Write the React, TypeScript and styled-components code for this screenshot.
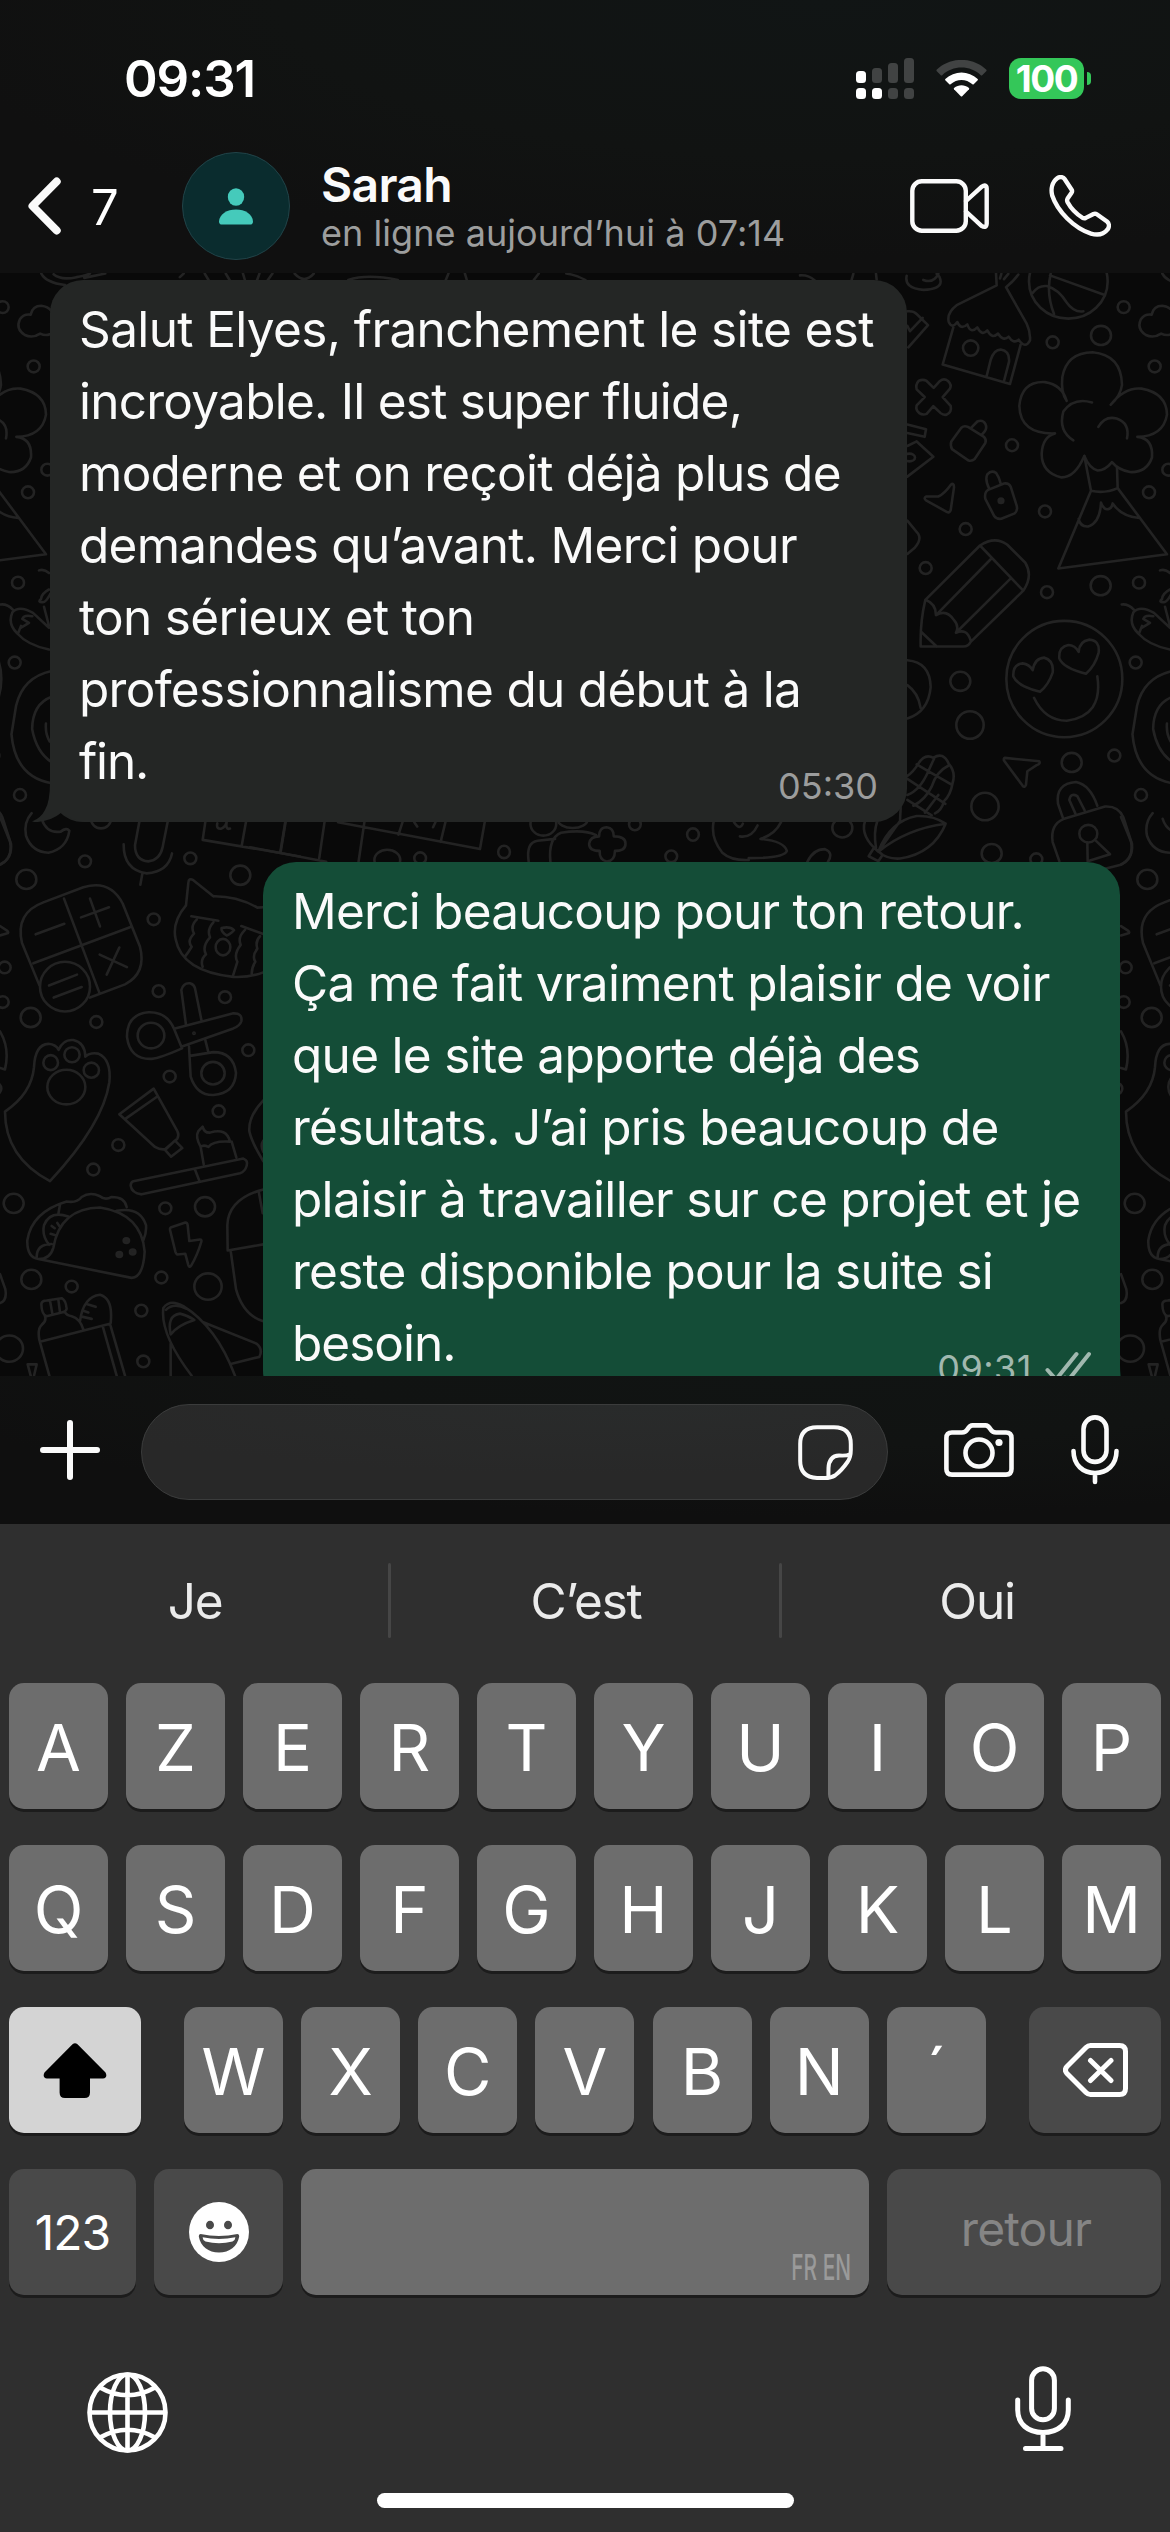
import React from "react";
import styled, { createGlobalStyle, css } from "styled-components";

const GlobalStyle = createGlobalStyle`
  * { box-sizing: border-box; }
  html, body { margin: 0; padding: 0; background: #2f2f2f; }
  body { font-family: Inter, Roboto, "Liberation Sans", sans-serif; color: #fff; }
  svg { display: block; flex: none; }
`;

const Screen = styled.div`
  width: 1170px;
  height: 2532px;
  display: flex;
  flex-direction: column;
  overflow: hidden;
  background: #2f2f2f;
`;

/* ---------- header ---------- */

const Header = styled.header`
  height: 273px;
  flex: none;
  background: radial-gradient(ellipse 900px 260px at 820px 0, #111515 0%, #111312 60%, #101010 100%);
`;

const StatusBar = styled.div`
  height: 148px;
  padding: 8px 79px 0 124px;
  display: flex;
  align-items: center;
`;

const Clock = styled.span`
  flex: 1;
  font-size: 51px;
  font-weight: 600;
  letter-spacing: -1.1px;
`;

const Battery = styled.div`
  width: 75px;
  height: 41px;
  margin-left: 22px;
  border-radius: 12px;
  background: #34c759;
  display: flex;
  align-items: center;
  justify-content: center;
  font-size: 37px;
  font-weight: 700;
  letter-spacing: -1.4px;
`;

const BatteryNub = styled.div`
  width: 4px;
  height: 13px;
  margin-left: 3px;
  border-radius: 0 4px 4px 0;
  background: #34c759;
`;

const NavBar = styled.div`
  height: 125px;
  padding: 0 59px 9px 28px;
  display: flex;
  align-items: center;
`;

const UnreadCount = styled.span`
  width: 91px;
  margin-left: 30px;
  padding-top: 2px;
  font-size: 49px;
`;

const Avatar = styled.div`
  width: 108px;
  height: 108px;
  border: 1px solid #214348;
  border-radius: 50%;
  background: #0a2c2e;
  display: flex;
  align-items: center;
  justify-content: center;
`;

const Contact = styled.div`
  flex: 1;
  margin-left: 31px;
  display: flex;
  flex-direction: column;
  gap: 3px;
`;

const ContactName = styled.span`
  font-size: 48px;
  line-height: 50px;
  font-weight: 600;
  letter-spacing: -0.7px;
  color: #fafafa;
`;

const ContactStatus = styled.span`
  font-size: 36px;
  line-height: 40px;
  letter-spacing: 0.05px;
  white-space: nowrap;
  color: #9d9e9e;
`;

const NavActions = styled.div`
  display: flex;
  align-items: center;
  gap: 60px;
`;

/* ---------- conversation ---------- */

const Conversation = styled.main`
  position: relative;
  height: 1103px;
  flex: none;
  overflow: hidden;
  background: #090909;
  display: flex;
  flex-direction: column;
  gap: 40px;
  padding: 7px 50px 0;
`;

const Wallpaper = styled.svg`
  position: absolute;
  left: 0;
  top: 0;

  .ink * {
    vector-effect: non-scaling-stroke;
  }
`;

const Bubble = styled.article<{ $mine?: boolean }>`
  position: relative;
  width: 857px;
  height: 542px;
  flex: none;
  padding: 13px 29px 18px;
  border-radius: 33px;
  display: flex;
  flex-direction: column;
  align-self: ${(p) => (p.$mine ? "flex-end" : "flex-start")};
  background: ${(p) => (p.$mine ? "#144d37" : "#242625")};
`;

const Tail = styled.svg<{ $mine?: boolean }>`
  position: absolute;
  bottom: 0;
  ${(p) =>
    p.$mine
      ? css`
          right: -18px;
          transform: scaleX(-1);
        `
      : css`
          left: -18px;
        `}
`;

const Line = styled.span<{ $track: number }>`
  position: relative;
  font-size: 49.5px;
  line-height: 72px;
  white-space: nowrap;
  color: #fafafa;
  letter-spacing: ${(p) => p.$track}px;
`;

const Meta = styled.div<{ $mine?: boolean }>`
  align-self: flex-end;
  position: relative;
  margin-top: -29px;
  display: flex;
  align-items: flex-start;
  gap: 13px;
  font-size: 36px;
  line-height: 36px;
  letter-spacing: ${(p) => (p.$mine ? "0.5px" : "0")};
  color: ${(p) => (p.$mine ? "#a1b8af" : "#9c9d9d")};
`;

/* ---------- composer ---------- */

const Composer = styled.section`
  height: 148px;
  flex: none;
  padding: 0 51px 0 40px;
  display: flex;
  align-items: center;
  background: radial-gradient(ellipse 900px 140px at 800px 0, #111413 0%, #111312 50%, #0f0f0f 100%);
`;

const Field = styled.div`
  width: 747px;
  height: 96px;
  margin: 4px 56px 0 41px;
  padding-right: 34px;
  border: 1px solid #3b3c3c;
  border-radius: 48px;
  background: radial-gradient(ellipse 560px 70px at 480px 0, #292b2b 0%, #282828 100%);
  display: flex;
  align-items: center;
  justify-content: flex-end;
`;

const MicSlot = styled.div`
  margin-left: 57px;
`;

/* ---------- keyboard ---------- */

const Keyboard = styled.section`
  flex: 1;
  display: flex;
  flex-direction: column;
`;

const Suggestions = styled.div`
  height: 153px;
  margin-bottom: 6px;
  display: flex;
  align-items: center;
`;

const Suggestion = styled.span`
  flex: 1;
  padding-left: 2px;
  text-align: center;
  font-size: 49.5px;
  letter-spacing: -1.2px;
  color: #ebebeb;
`;

const Divider = styled.i`
  width: 3px;
  height: 75px;
  border-radius: 2px;
  background: #464646;
`;

const Rows = styled.div`
  padding: 0 9px;
  display: flex;
  flex-direction: column;
  gap: 36px;
`;

const Row = styled.div`
  display: flex;
  justify-content: space-between;
`;

const LetterGroup = styled.div`
  width: 802px;
  display: flex;
  justify-content: space-between;
`;

type Tone = "letter" | "dark" | "light";

const tones: Record<Tone, string> = {
  letter: "#6d6d6d",
  dark: "#494949",
  light: "#d4d4d4",
};

const Key = styled.div<{ $w?: number; $tone?: Tone }>`
  width: ${(p) => p.$w ?? 99}px;
  height: 126px;
  padding-top: 3px;
  border-radius: 15px;
  background: ${(p) => tones[p.$tone ?? "letter"]};
  box-shadow: 0 3px 0 #1c1c1c;
  display: flex;
  align-items: center;
  justify-content: center;
  font-size: 65px;
`;

const IconKey = styled(Key)`
  padding-top: 0;
`;

const LabelKey = styled(Key)<{ $muted?: boolean }>`
  font-size: 48px;
  ${(p) =>
    p.$muted
      ? css`
          padding: 0 0 8px 4px;
          letter-spacing: -0.9px;
          color: #858585;
        `
      : css`
          padding: 0;
          letter-spacing: -1px;
        `}
`;

const SpaceKey = styled(Key)`
  align-items: flex-end;
  justify-content: flex-end;
  padding: 0 18px 8px 0;
`;

const Languages = styled.span`
  font-size: 36px;
  line-height: 40px;
  font-weight: 500;
  white-space: nowrap;
  color: #9a9a9a;
  transform: scaleX(0.58);
  transform-origin: right center;
`;

const KeyboardFooter = styled.div`
  height: 198px;
  padding: 36px 99px 0 87px;
  display: flex;
  align-items: center;
  justify-content: space-between;
`;

const FooterMic = styled.div`
  margin-top: -7px;
`;

const HomeIndicator = styled.div`
  width: 417px;
  height: 15px;
  margin: 0 auto;
  border-radius: 8px;
  background: #fff;
`;

/* ---------- icons ---------- */

const line = { fill: "none", stroke: "#fafafa", strokeLinecap: "round" as const, strokeLinejoin: "round" as const };

const Signal = () => (
  <svg width="58" height="41" viewBox="0 0 58 41">
    <g fill="#fff">
      <rect x="0" y="13" width="10" height="12" rx="3.5" />
      <rect x="0" y="30" width="10" height="11" rx="3.5" />
      <rect x="16" y="30" width="10" height="11" rx="3.5" />
    </g>
    <g fill="#414343">
      <rect x="16" y="10" width="10" height="15" rx="3.5" />
      <rect x="32" y="5" width="10" height="20" rx="3.5" />
      <rect x="48" y="0" width="10" height="25" rx="3.5" />
      <rect x="32" y="30" width="10" height="11" rx="3.5" />
      <rect x="48" y="30" width="10" height="11" rx="3.5" />
    </g>
  </svg>
);

const WifiGlyph = styled.svg`
  margin-left: 22px;
`;

const WifiIcon = () => (
  <WifiGlyph width="51" height="37" viewBox="0 0 51 37">
    <path d="M0.6 9.8C14-3.4 37-3.4 50.4 9.8Q50.8 10.6 50.2 11.2L46.2 15.2Q45.4 15.8 44.8 15.2C34 5 17 5 6.200 15.200Q5.500 15.800 4.800 15.200L0.800 11.200Q0.200 10.600 0.600 9.800Z" fill="#414343" />
    <path d="M9.300 19C18.500 10.300 32.500 10.300 41.700 19Q42.200 19.700 41.700 20.300L37.700 24.300Q37 24.800 36.400 24.300C30 18.500 21 18.500 14.600 24.300Q14 24.800 13.300 24.300L9.300 20.300Q8.800 19.700 9.300 19Z" fill="#fff" />
    <path d="M18 28C22.500 24.300 28.500 24.300 33 28Q33.500 28.600 33 29.200L26.200 36.300Q25.500 36.900 24.800 36.300L18 29.200Q17.500 28.600 18 28Z" fill="#fff" />
  </WifiGlyph>
);

const BackIcon = () => (
  <svg width="33" height="58" viewBox="0 0 33 58">
    <path d="M28.700 4.500L4.500 29L28.700 53.500" {...line} strokeWidth="8" />
  </svg>
);

const PersonIcon = () => (
  <svg width="34" height="37" viewBox="0 0 34 37" fill="#45cabb">
    <ellipse cx="17" cy="9" rx="8.200" ry="8.800" />
    <path d="M3 36.600Q0 36.600 0 33.500C0.500 26 8 21.500 17 21.500S33.500 26 34 33.500Q34 36.600 31 36.600Z" />
  </svg>
);

const VideoIcon = () => (
  <svg width="79" height="54" viewBox="0 0 79 54">
    <g {...line} strokeWidth="4.400">
      <rect x="2.300" y="2.300" width="53.500" height="49.400" rx="9.500" />
      <path d="M56 22L71.500 7.800Q76.500 4.600 76.700 9.500V44.500Q76.500 49.800 71.500 46.800L56 32.500" />
    </g>
  </svg>
);

const PhoneIcon = () => (
  <svg width="62" height="62" viewBox="0 0 62 62">
    <path
      d="M8.200 3.200C10.500 1.500 14 1.600 15.600 4L22.800 15Q23.500 16.500 22.400 18L18.600 23.500Q17.600 25.200 18.600 27.200C22 33.500 27.500 39 33.800 43Q35.200 43.600 36.800 42.900L44.500 39Q46.200 38.200 47.800 39.300L58 46.500C60.500 48.600 60.400 51.800 58.600 54.400C54.500 59.600 48.500 60.500 42 58.600C25 53 8.500 36.500 3.200 20.500C1.600 14 3.200 7 8.200 3.200Z"
      {...line}
      strokeWidth="4.400"
    />
  </svg>
);

const Ticks = () => (
  <svg width="46" height="34" viewBox="0 0 46 34">
    <path d="M2.500 20L11 29.500L31.500 4M20 27.500L23 30.500L44 4" fill="none" stroke="#a1b8af" strokeWidth="4" strokeLinecap="round" strokeLinejoin="round" />
  </svg>
);

const PlusIcon = () => (
  <svg width="60" height="60" viewBox="0 0 60 60">
    <path d="M30 3V57M3 30H57" {...line} strokeWidth="6" />
  </svg>
);

const StickerIcon = () => (
  <svg width="55" height="55" viewBox="0 0 55 55">
    <g {...line} strokeWidth="4">
      <path d="M19 2.200H36Q52.800 2.200 52.800 19V25Q52.800 32.500 49.500 37C46 42 41 47.500 37 50.500Q33 53 27 53H19Q2.200 52 2.200 36V19Q2.200 2.200 19 2.200Z" />
      <path d="M30.500 52Q30.300 49 30.500 43Q31 31 41 30.500Q48.500 31 51.500 29.500" />
    </g>
  </svg>
);

const CameraIcon = () => (
  <svg width="70" height="54" viewBox="0 0 70 54">
    <g {...line} strokeWidth="4.600">
      <path d="M8 9.500H18Q21.500 9.500 23.300 6.500Q25.800 2.400 28.500 2.400H41.500Q44.200 2.400 46.700 6.500Q48.500 9.500 52 9.500H62Q67.500 9.500 67.500 15V46Q67.500 51.600 62 51.600H8Q2.400 51.600 2.400 46V15Q2.400 9.500 8 9.500Z" />
      <circle cx="35" cy="30" r="13.500" />
    </g>
    <circle cx="55" cy="19.500" r="3.600" fill="#fafafa" />
  </svg>
);

const MicIcon = () => (
  <svg width="48" height="70" viewBox="0 0 48 70">
    <g {...line} strokeWidth="4.600">
      <rect x="12.500" y="2.400" width="23" height="44.500" rx="11.500" />
      <path d="M2.500 36C2.500 50 12 58 24 58S45.500 50 45.500 36M24 58V67" />
    </g>
  </svg>
);

const DictationIcon = () => (
  <svg width="56" height="86" viewBox="0 0 56 86">
    <g {...line} strokeWidth="5" stroke="#fff">
      <rect x="16.600" y="2.800" width="22.800" height="51" rx="11.400" />
      <path d="M2.700 34V44C2.700 58 13 66.500 28 66.500S53.300 58 53.300 44V34M28 67V82.500M10.500 82.500H46" />
    </g>
  </svg>
);

const ShiftIcon = () => (
  <svg width="64" height="55" viewBox="0 0 64 55">
    <path d="M29.500 1.200Q32 -0.800 34.500 1.200L62.500 29.500Q65 34.500 60 35.500H47V49.500Q47 55 41.500 55H22Q16.600 55 16.600 49.500V35.500H4Q-1 34.500 1.500 29.500Z" />
  </svg>
);

const BackspaceIcon = () => (
  <svg width="65" height="54" viewBox="0 0 65 54">
    <path d="M27.500 2.500H56.500Q62.500 2.500 62.500 8.500V45.500Q62.500 51.500 56.500 51.500H27.500Q25 51.500 23 49.500L4 30.500Q0.800 27 4 23.500L23 4.500Q25 2.500 27.500 2.500ZM27.500 17.500L48 37.500M48 17.500L27.500 37.500" {...line} stroke="#fff" strokeWidth="5" />
  </svg>
);

const EmojiIcon = () => (
  <svg width="60" height="60" viewBox="0 0 60 60">
    <circle cx="30" cy="30" r="30" fill="#fff" />
    <ellipse cx="21" cy="23" rx="4" ry="4.300" fill="#494949" />
    <ellipse cx="39" cy="23" rx="4" ry="4.300" fill="#494949" />
    <path d="M11.500 32Q30 36 48.500 32Q50.500 32 50.200 34.500C48.500 44.500 40.500 50.500 30 50.500S11.500 44.500 9.800 34.500Q9.500 32 11.500 32Z" fill="#494949" />
    <path d="M13.600 35.200Q30 38.600 46.400 35.200Q46.200 38.500 43.500 39.500Q30 43 16.500 39.500Q13.800 38.500 13.600 35.200Z" fill="#fff" />
  </svg>
);

const GlobeIcon = () => (
  <svg width="81" height="81" viewBox="0 0 81 81">
    <g fill="none" stroke="#fff" strokeWidth="4.600">
      <circle cx="40.500" cy="40.500" r="38" />
      <ellipse cx="40.500" cy="40.500" rx="17.500" ry="38" />
      <path d="M40.500 2.500V78.500M2.500 40.500H78.500M13 15.500Q40.500 31 68 15.500M13 65.500Q40.500 50 68 65.500" />
    </g>
  </svg>
);

/* ---------- wallpaper doodles ---------- */

type Ring = [number, number, number, number];

const Rings = ({ items }: { items: Ring[] }) => (
  <>
    {items.map(([cx, cy, rx, ry]) => (
      <ellipse key={`${cx}-${cy}`} cx={cx} cy={cy} rx={rx} ry={ry} />
    ))}
  </>
);

const sized = (points: [number, number][], rx: number, ry: number): Ring[] => points.map(([x, y]) => [x, y, rx, ry]);

const upperRings: Ring[] = [
  ...sized([[971, 97], [758, 189], [1064, 252], [636, 458], [735, 631], [497, 677], [377, 779], [741, 842], [1017, 817], [1047, 581], [1007, 1026], [943, 1269], [1023, 1372], [709, 1540], [1105, 522]], 18, 15.5),
  ...sized([[903, 171], [902, 825], [481, 1075], [815, 1287], [575, 1525], [127, 1458]], 30, 25),
  ...sized([[510, 1189], [555, 1402]], 41, 36),
  [805, 30, 118, 97], [512, 204, 23, 20], [793, 1069, 174, 152], [865, 1473, 27, 23], [328, 490, 17, 10],
];

const upperPaths = [
  "M588 8L590 40L470 92Q440 112 446 135Q456 155 472 136Q482 158 502 142Q512 168 532 150Q546 174 562 158Q576 182 594 166Q610 188 626 174Q640 194 656 182Q676 208 690 184Q692 162 680 140L618 45Q640 30 655 12M600 22L604 10M612 24L625 10",
  "M460 150L428 247L630 298L662 195M560 277L572 235Q582 208 602 208Q630 212 627 240L612 290",
  "M752 10Q738 60 762 115M750 14L910 64M698 60Q715 40 740 42Q775 50 800 85Q822 112 850 108",
  "M320 15Q312 48 370 52Q422 50 422 30Q420 15 410 10M370 26Q400 36 415 10",
  "M401 308L420 290Q432 282 444 290Q456 300 450 310L428 332L452 355Q456 372 440 378Q430 380 422 374L400 356L380 376Q368 380 358 374Q346 366 350 354L374 332L350 312Q346 300 356 290Q368 284 380 290Z",
  "M484 412Q492 406 504 410L552 436Q560 444 556 452L524 494Q516 500 506 498L456 468Q450 458 454 448ZM514 412L532 396Q548 390 556 402Q562 412 554 422L544 432",
  "M566 574L612 558Q626 556 632 566L650 616Q654 628 644 636L604 650Q590 652 582 642L556 598Q552 580 566 574ZM568 572Q554 548 562 534Q574 522 588 530Q598 542 602 558",
  "M378 592L415 592Q432 586 452 562Q462 554 462 568L452 628Q448 636 440 632L378 602Q370 596 378 592Z",
  "M800 342Q782 320 787 280Q800 216 878 215Q964 222 966 300Q962 328 932 352Q975 305 1025 310Q1100 322 1101 378Q1090 435 1012 436Q1060 440 1056 490Q1040 530 990 528Q955 522 936 502Q915 524 893 524Q868 518 853 486Q825 542 785 542Q725 530 725 480Q728 435 765 427Q660 430 658 355Q665 290 735 293Q786 300 800 342M876 346Q820 332 790 370Q774 420 820 445M895 410Q915 380 950 388Q990 400 981 440",
  "M853 486L873 577L775 780L1101 743L953 570L951 515M873 577Q915 585 953 570M836 650Q840 672 866 670Q900 660 903 608Q912 630 928 624Q936 620 938 610Q965 645 1018 648",
  "M540 720L376 862Q360 920 362 984L490 984Q505 984 512 972L670 838Q700 800 676 765L622 718Q585 694 540 720ZM540 720L670 838M572 756L408 902Q408 872 376 862M408 902Q440 885 462 915Q478 930 468 948Q500 935 512 968M468 948L630 808M364 946L410 984",
  "M836 998Q838 970 868 966Q900 968 896 1000Q885 1035 858 1055Q790 1040 778 1015Q775 985 805 980Q825 980 836 998ZM698 1046Q704 1015 732 1013Q762 1020 758 1052Q745 1085 720 1102Q655 1090 640 1062Q638 1030 668 1028Q688 1030 698 1046ZM702 1118Q735 1178 800 1178Q910 1165 892 1062",
  "M615 1275L718 1284Q722 1290 710 1294L682 1310L678 1345Q674 1354 668 1348L612 1282Q610 1276 615 1275Z",
  "M790 1435L774 1395Q766 1342 828 1338Q870 1345 892 1400M826 1420L808 1385Q812 1365 832 1375L854 1412M790 1435L915 1402Q955 1400 970 1430L996 1500Q1000 1540 960 1555L900 1568M790 1435Q750 1450 758 1495L778 1545M862 1496L863 1545L930 1527L888 1492",
  "M322 1322Q340 1312 355 1290Q375 1262 400 1275Q430 1258 446 1290Q468 1312 458 1340Q452 1372 432 1388Q425 1412 405 1420M322 1330L436 1395M350 1292Q385 1310 455 1345M322 1385L395 1425M322 1372Q360 1360 385 1310Q395 1290 402 1278M340 1400Q375 1385 395 1350Q410 1310 446 1295M375 1418L415 1372",
  "M235 1520Q270 1440 350 1427Q400 1425 437 1447Q400 1525 300 1538Q260 1540 235 1520M437 1447Q320 1460 235 1520M235 1520Q180 1480 195 1440M228 1510Q220 1470 232 1440M235 1520L300 1440L302 1405M206 1532L235 1545L248 1528L222 1510Z",
  "M322 108Q340 106 350 115L384 144L325 202M322 146L330 160L368 125M322 404L378 416L374 436L322 426M322 460L350 448L400 488L322 540M322 655L355 690Q365 705 345 725L322 742M322 1020Q390 1025 392 1090Q385 1155 322 1172M322 1085Q355 1105 362 1145",
  "M965 874Q985 872 1002 888M1062 896Q1020 875 1000 895Q985 925 1015 950Q1045 980 1110 992M1018 948L1026 930M1062 896L1110 935M1060 905Q1035 900 1030 912L1050 922L1025 935M1080 785Q1095 780 1110 792M1110 835Q1088 845 1086 860Q1075 868 1090 868Q1100 870 1115 845M1095 880L1110 930",
  "M0 14Q25 12 45 28M155 25L160 10M228 10L230 25",
];

const leftPaths = [
  "M130 180Q118 185 105 178Q85 192 65 182Q40 165 52 138Q62 122 80 125Q85 100 108 100Q125 102 135 115",
  "M135 1123Q60 1140 42 1220L30 1300Q40 1420 135 1437M135 1195Q85 1215 84 1285Q95 1350 135 1378M120 1270Q118 1300 130 1320",
  "M108 10Q120 35 170 42M140 12Q160 30 200 20Q225 15 235 10M220 22L275 10M470 20L480 10M535 10L545 28M590 10L600 28M635 10L640 28M672 28L678 10M700 28L712 10M770 10Q795 40 820 10M910 28Q960 10 1040 28M1165 28L1172 10M1215 10L1220 28M1395 28L1408 10M1480 10Q1510 15 1530 28",
];

const lowerRings: Ring[] = [
  ...sized([[255, 163], [571, 155], [461, 317], [14, 445], [476, 508], [675, 524], [289, 590], [745, 665], [509, 735], [656, 827], [355, 917], [280, 982], [496, 1085], [484, 1269], [215, 1293], [424, 1357], [430, 1492], [8, 537], [-14, 767]], 18, 15.5),
  ...sized([[79, 211], [721, 200], [92, 578], [41, 1072], [615, 1081], [94, 1274], [303, 50]], 30, 25.5),
  ...sized([[624, 1293], [28, 1458]], 41, 35),
  [195, 496, 75, 66], [669, 391, 22, 22], [453, 626, 40, 34], [639, 726, 35, 30],
  [152, 698, 22, 20], [216, 677, 23, 20], [274, 718, 23, 20], [199, 763, 57, 46],
];

const lowerPaths = [
  "M95 35Q70 60 78 95Q95 138 145 140Q200 130 208 82Q200 72 182 84Q140 90 125 50",
  "M418 58L405 120Q405 160 445 163Q480 160 488 125L503 58M371 118Q370 185 440 195Q505 190 516 142M427 196L421 225",
  "M616 58L608 106L790 133L900 150M738 58L725 122M857 58L842 138M652 62Q648 78 664 76Q676 72 680 58Q676 80 690 76",
  "M130 272L250 232Q330 210 368 275L420 390Q440 460 375 490L270 525M130 272Q45 300 66 380L118 492M192 262L298 512M100 434L390 338M107 357L193 329M243 312L327 285M270 262L300 336M299 411L381 444M358 392L320 464M147 493L231 464M161 525L245 497",
  "M790 285L772 286Q710 255 640 256L580 213Q566 206 565 220L558 280Q515 325 527 370Q545 455 700 470Q750 472 790 458M574 309L655 321M724 335L790 356M590 318Q570 335 582 355Q560 375 575 390Q565 405 556 415M640 325Q620 345 630 365Q605 390 618 410Q600 425 608 443M735 345Q712 365 722 385Q700 410 712 430Q705 450 700 464M780 362Q765 375 772 395Q755 415 766 430Q755 445 755 462M665 340Q690 335 702 346Q690 358 680 360Q662 350 665 340Z",
  "M546 660L522 608Q500 562 445 564Q380 570 381 630Q390 690 455 688Q480 686 546 660ZM522 608L700 567Q728 566 724 588Q720 600 700 607L546 655M558 598L544 505Q550 485 570 487Q582 490 585 500L605 588M567 655L572 735Q590 785 640 784Q705 780 708 725Q700 670 640 670L570 680M616 638L625 670",
  "M15 828Q95 780 102 710Q105 650 145 648Q168 650 176 664Q190 635 220 638Q255 645 256 682Q270 670 295 674Q335 690 328 750Q310 860 150 1013Q15 950 15 828Z",
  "M461 767L358 835L465 922Q480 930 495 928L532 900Q538 890 532 880ZM378 846L472 788M495 930L525 905L547 925L513 948Z",
  "M400 1013L730 953Q745 958 740 972Q735 988 720 992L425 1048Q395 1045 392 1025Q392 1015 400 1013ZM584 980L598 1012M611 968L602 922Q585 895 595 880L608 868Q612 885 630 884Q680 870 690 908Q640 905 625 922Q610 915 602 922M695 908L709 950",
  "M790 798Q745 840 748 880Q755 910 790 960M790 905Q780 918 790 935",
  "M790 1035Q685 1060 682 1130L683 1197L790 1181M692 1198L708 1300Q730 1370 790 1385M776 1040L788 1098",
  "M115 1220L395 1270Q430 1268 434 1200Q425 1100 300 1083Q180 1085 160 1190Q150 1220 115 1220Q80 1215 82 1170Q95 1095 200 1067Q230 1072 245 1055Q270 1040 300 1053Q315 1065 335 1055Q375 1055 380 1082M350 1092Q420 1080 438 1130Q440 1150 430 1170M205 1107Q150 1090 132 1130Q125 1160 148 1182M180 1075L175 1100M110 1215Q110 1180 155 1180M155 1132L164 1138M152 1153L164 1156M172 1124L178 1132",
  "M512 1136L556 1123Q562 1122 563 1130L568 1172L600 1168Q606 1168 604 1174Q592 1210 573 1238Q568 1244 565 1236L556 1206L532 1208Q528 1206 526 1200L510 1142Q509 1138 512 1136Z",
  "M124 1340Q125 1330 140 1330L185 1324Q198 1330 200 1352Q198 1360 185 1362L140 1372Q125 1368 124 1340M150 1330L157 1365M175 1327L180 1362M135 1372Q140 1385 125 1395Q112 1405 118 1435L148 1530M195 1362Q200 1370 215 1372Q240 1378 250 1407M120 1440L330 1392L375 1530M308 1398L350 1530M332 1390Q340 1325 300 1315Q250 1320 240 1385M262 1340L287 1347M252 1358L265 1362M245 1373L275 1379",
  "M575 1530Q480 1420 490 1350Q510 1325 550 1345Q650 1400 705 1530M610 1388L770 1445Q790 1460 778 1480L695 1498M512 1420Q500 1370 540 1365Q565 1370 583 1382Q535 1395 512 1420M512 1445L512 1530M498 1355Q520 1335 560 1352",
  "M0 45L30 110Q40 155 0 172M0 335L22 348Q28 354 20 355L0 360M0 615Q30 660 15 716L0 712M0 1260L16 1300Q22 1330 0 1337M83 1500H110L102 1530M83 1500L92 1530",
];

const middleRings: Ring[] = [
  [234, 110, 22, 28], [290, 105, 10, 16], [433, 88, 10, 17], [500, 10, 22, 33], [550, 0, 25, 22],
  [656, 12, 10, 16], [755, 40, 10, 17], [718, 100, 10, 16],
];

const middlePaths = [
  "M392 80L150 6M60 6L52 85M127 6L118 105M195 6L185 115M260 6L253 40M333 6L325 60M400 6L392 80M0 75L130 115M280 6L285 18M312 20L316 6",
  "M475 115Q470 62 490 57L520 52M512 115Q508 50 530 35Q570 25 590 42M595 45Q595 20 608 20Q620 22 620 45Q640 45 640 65Q640 85 622 85Q622 112 608 114Q595 110 596 85Q578 85 578 65Q580 45 595 45",
  "M790 6Q785 50 805 90Q820 112 850 110M850 105Q910 105 915 85Q910 58 870 52Q895 40 905 6M825 6Q835 30 840 10M835 45Q855 50 865 15M950 115Q960 80 980 80Q995 90 985 115",
];

const INK = "#232323";

const Doodles = () => (
  <Wallpaper width="1170" height="1103" viewBox="0 273 1170 1103">
    <defs>
      <g id="tile" className="ink" fill="none" stroke={INK} strokeWidth="2.6" strokeLinecap="round" strokeLinejoin="round">
        <g transform="translate(800 270) scale(0.33333 0.38265)">
          <Rings items={upperRings} />
          {upperPaths.map((d) => <path key={d} d={d} />)}
          <ellipse cx="603" cy="603" rx="7" ry="6" fill={INK} />
        </g>
        <g transform="translate(0 270) scale(0.38265 0.35714)">
          {leftPaths.map((d) => <path key={d} d={d} />)}
        </g>
        <g transform="translate(0 800) scale(0.33333 0.37628)">
          <Rings items={lowerRings} />
          {lowerPaths.map((d) => <path key={d} d={d} />)}
          <g fill={INK}>
            <ellipse cx="379" cy="1171" rx="8" ry="6.5" />
            <ellipse cx="358" cy="1208" rx="8" ry="6.5" />
            <ellipse cx="398" cy="1201" rx="8" ry="6.5" />
            <circle cx="582" cy="620" r="2" />
          </g>
        </g>
        <g transform="translate(250 820) scale(0.58673 0.36352)">
          <Rings items={middleRings} />
          {middlePaths.map((d) => <path key={d} d={d} />)}
        </g>
      </g>
    </defs>
    <use href="#tile" />
    <use href="#tile" x="-1121" />
    <use href="#tile" x="1121" />
  </Wallpaper>
);

/* ---------- content ---------- */

/* Each line carries its own tracking, in pixels. */
const received: [string, number][] = [
  ["Salut Elyes, franchement le site est", -0.63],
  ["incroyable. Il est super fluide,", -0.75],
  ["moderne et on reçoit déjà plus de", -0.73],
  ["demandes qu’avant. Merci pour", -0.72],
  ["ton sérieux et ton", -0.68],
  ["professionnalisme du début à la", -0.7],
  ["fin.", -1.2],
];

const sent: [string, number][] = [
  ["Merci beaucoup pour ton retour.", -0.75],
  ["Ça me fait vraiment plaisir de voir", -0.7],
  ["que le site apporte déjà des", -0.7],
  ["résultats. J’ai pris beaucoup de", -0.74],
  ["plaisir à travailler sur ce projet et je", -0.71],
  ["reste disponible pour la suite si", -0.74],
  ["besoin.", -1],
];

const TailShape = ({ mine }: { mine?: boolean }) => (
  <Tail $mine={mine} width="52" height="60" viewBox="0 0 52 60">
    <path d="M18 0V20Q18 40 13 48Q9 56 0 59.500Q2 60 6 60Q20 58.500 29.500 50.500Q38 58 52 60V0Z" fill={mine ? "#144d37" : "#242625"} />
  </Tail>
);

const Message = ({ lines, time, mine }: { lines: [string, number][]; time: string; mine?: boolean }) => (
  <Bubble $mine={mine}>
    <TailShape mine={mine} />
    {lines.map(([text, track]) => (
      <Line key={text} $track={track}>{text}</Line>
    ))}
    <Meta $mine={mine}>
      {time}
      {mine && <Ticks />}
    </Meta>
  </Bubble>
);

export default function App() {
  return (
    <Screen>
      <GlobalStyle />
      <Header>
        <StatusBar>
          <Clock>09:31</Clock>
          <Signal />
          <WifiIcon />
          <Battery>100</Battery>
          <BatteryNub />
        </StatusBar>
        <NavBar>
          <BackIcon />
          <UnreadCount>7</UnreadCount>
          <Avatar><PersonIcon /></Avatar>
          <Contact>
            <ContactName>Sarah</ContactName>
            <ContactStatus>en ligne aujourd’hui à 07:14</ContactStatus>
          </Contact>
          <NavActions>
            <VideoIcon />
            <PhoneIcon />
          </NavActions>
        </NavBar>
      </Header>

      <Conversation>
        <Doodles />
        <Message lines={received} time="05:30" />
        <Message lines={sent} time="09:31" mine />
      </Conversation>

      <Composer>
        <PlusIcon />
        <Field><StickerIcon /></Field>
        <CameraIcon />
        <MicSlot><MicIcon /></MicSlot>
      </Composer>

      <Keyboard>
        <Suggestions>
          <Suggestion>Je</Suggestion>
          <Divider />
          <Suggestion>C’est</Suggestion>
          <Divider />
          <Suggestion>Oui</Suggestion>
        </Suggestions>
        <Rows>
          <Row>{[..."AZERTYUIOP"].map((k) => <Key key={k}>{k}</Key>)}</Row>
          <Row>{[..."QSDFGHJKLM"].map((k) => <Key key={k}>{k}</Key>)}</Row>
          <Row>
            <IconKey $w={132} $tone="light"><ShiftIcon /></IconKey>
            <LetterGroup>{[..."WXCVBN´"].map((k) => <Key key={k}>{k}</Key>)}</LetterGroup>
            <IconKey $w={132} $tone="dark"><BackspaceIcon /></IconKey>
          </Row>
          <Row>
            <LabelKey $w={127} $tone="dark">123</LabelKey>
            <IconKey $w={129} $tone="dark"><EmojiIcon /></IconKey>
            <SpaceKey $w={568}><Languages>FR EN</Languages></SpaceKey>
            <LabelKey $w={274} $tone="dark" $muted>retour</LabelKey>
          </Row>
        </Rows>
        <KeyboardFooter>
          <GlobeIcon />
          <FooterMic><DictationIcon /></FooterMic>
        </KeyboardFooter>
        <HomeIndicator />
      </Keyboard>
    </Screen>
  );
}
